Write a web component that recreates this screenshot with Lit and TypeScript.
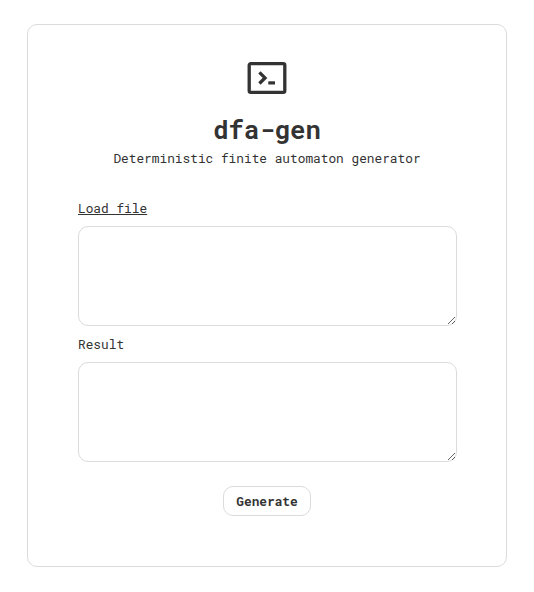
import { LitElement, html, css } from "lit";
import { customElement } from "lit/decorators.js";

@customElement("app-root")
export class AppRoot extends LitElement {
  static styles = css`
    :host {
      display: block;
      box-sizing: border-box;
      height: 592px;
      padding: 24px 27px;
      background: #fff;
      color: #333;
      font: 12.8px/16px "Roboto Mono", "Liberation Mono", "DejaVu Sans Mono", monospace;
    }
    .card {
      box-sizing: border-box;
      width: 480px;
      height: 543px;
      padding: 37px 50px 0;
      border: 1px solid #dbdbdb;
      border-radius: 10px;
      display: flex;
      flex-direction: column;
    }
    .icon { display: block; width: 40px; height: 32px; align-self: center; }
    h1 { margin: 18px 0 0; font-size: 25.6px; line-height: 34px; text-align: center; font-weight: 700; }
    .tag { text-align: center; margin: 4px 0 34px; }
    .label { align-self: flex-start; margin-bottom: 10px; }
    .link { text-decoration: underline; }
    textarea {
      box-sizing: border-box;
      width: 379px;
      height: 100px;
      margin: 0 0 10px;
      border: 1px solid #dbdbdb;
      border-radius: 10px;
      outline: none;
      font: inherit;
      background: #fff;
      resize: both;
      flex: none;
    }
    button {
      box-sizing: border-box;
      align-self: center;
      width: 88px;
      height: 30px;
      margin-top: 14px;
      padding: 0;
      border: 1px solid #dbdbdb;
      border-radius: 10px;
      background: #fff;
      color: inherit;
      font: inherit;
      font-weight: 700;
    }
  `;

  render() {
    return html`
      <main class="card">
        <svg class="icon" viewBox="0 0 40 32" fill="none" stroke="currentColor" aria-hidden="true">
          <rect x="2.2" y="1.65" width="35.6" height="28.7" rx="1.6" stroke-width="3.3" />
          <path d="M12.400 10.300l5.600 5.600-5.600 5.600" stroke-width="3.3" />
          <path d="M21.300 20.900h6.700" stroke-width="3.200" />
        </svg>
        <h1>dfa-gen</h1>
        <div class="tag">Deterministic finite automaton generator</div>
        <label class="label link">Load file</label>
        <textarea></textarea>
        <label class="label">Result</label>
        <textarea></textarea>
        <button>Generate</button>
      </main>
    `;
  }
}
